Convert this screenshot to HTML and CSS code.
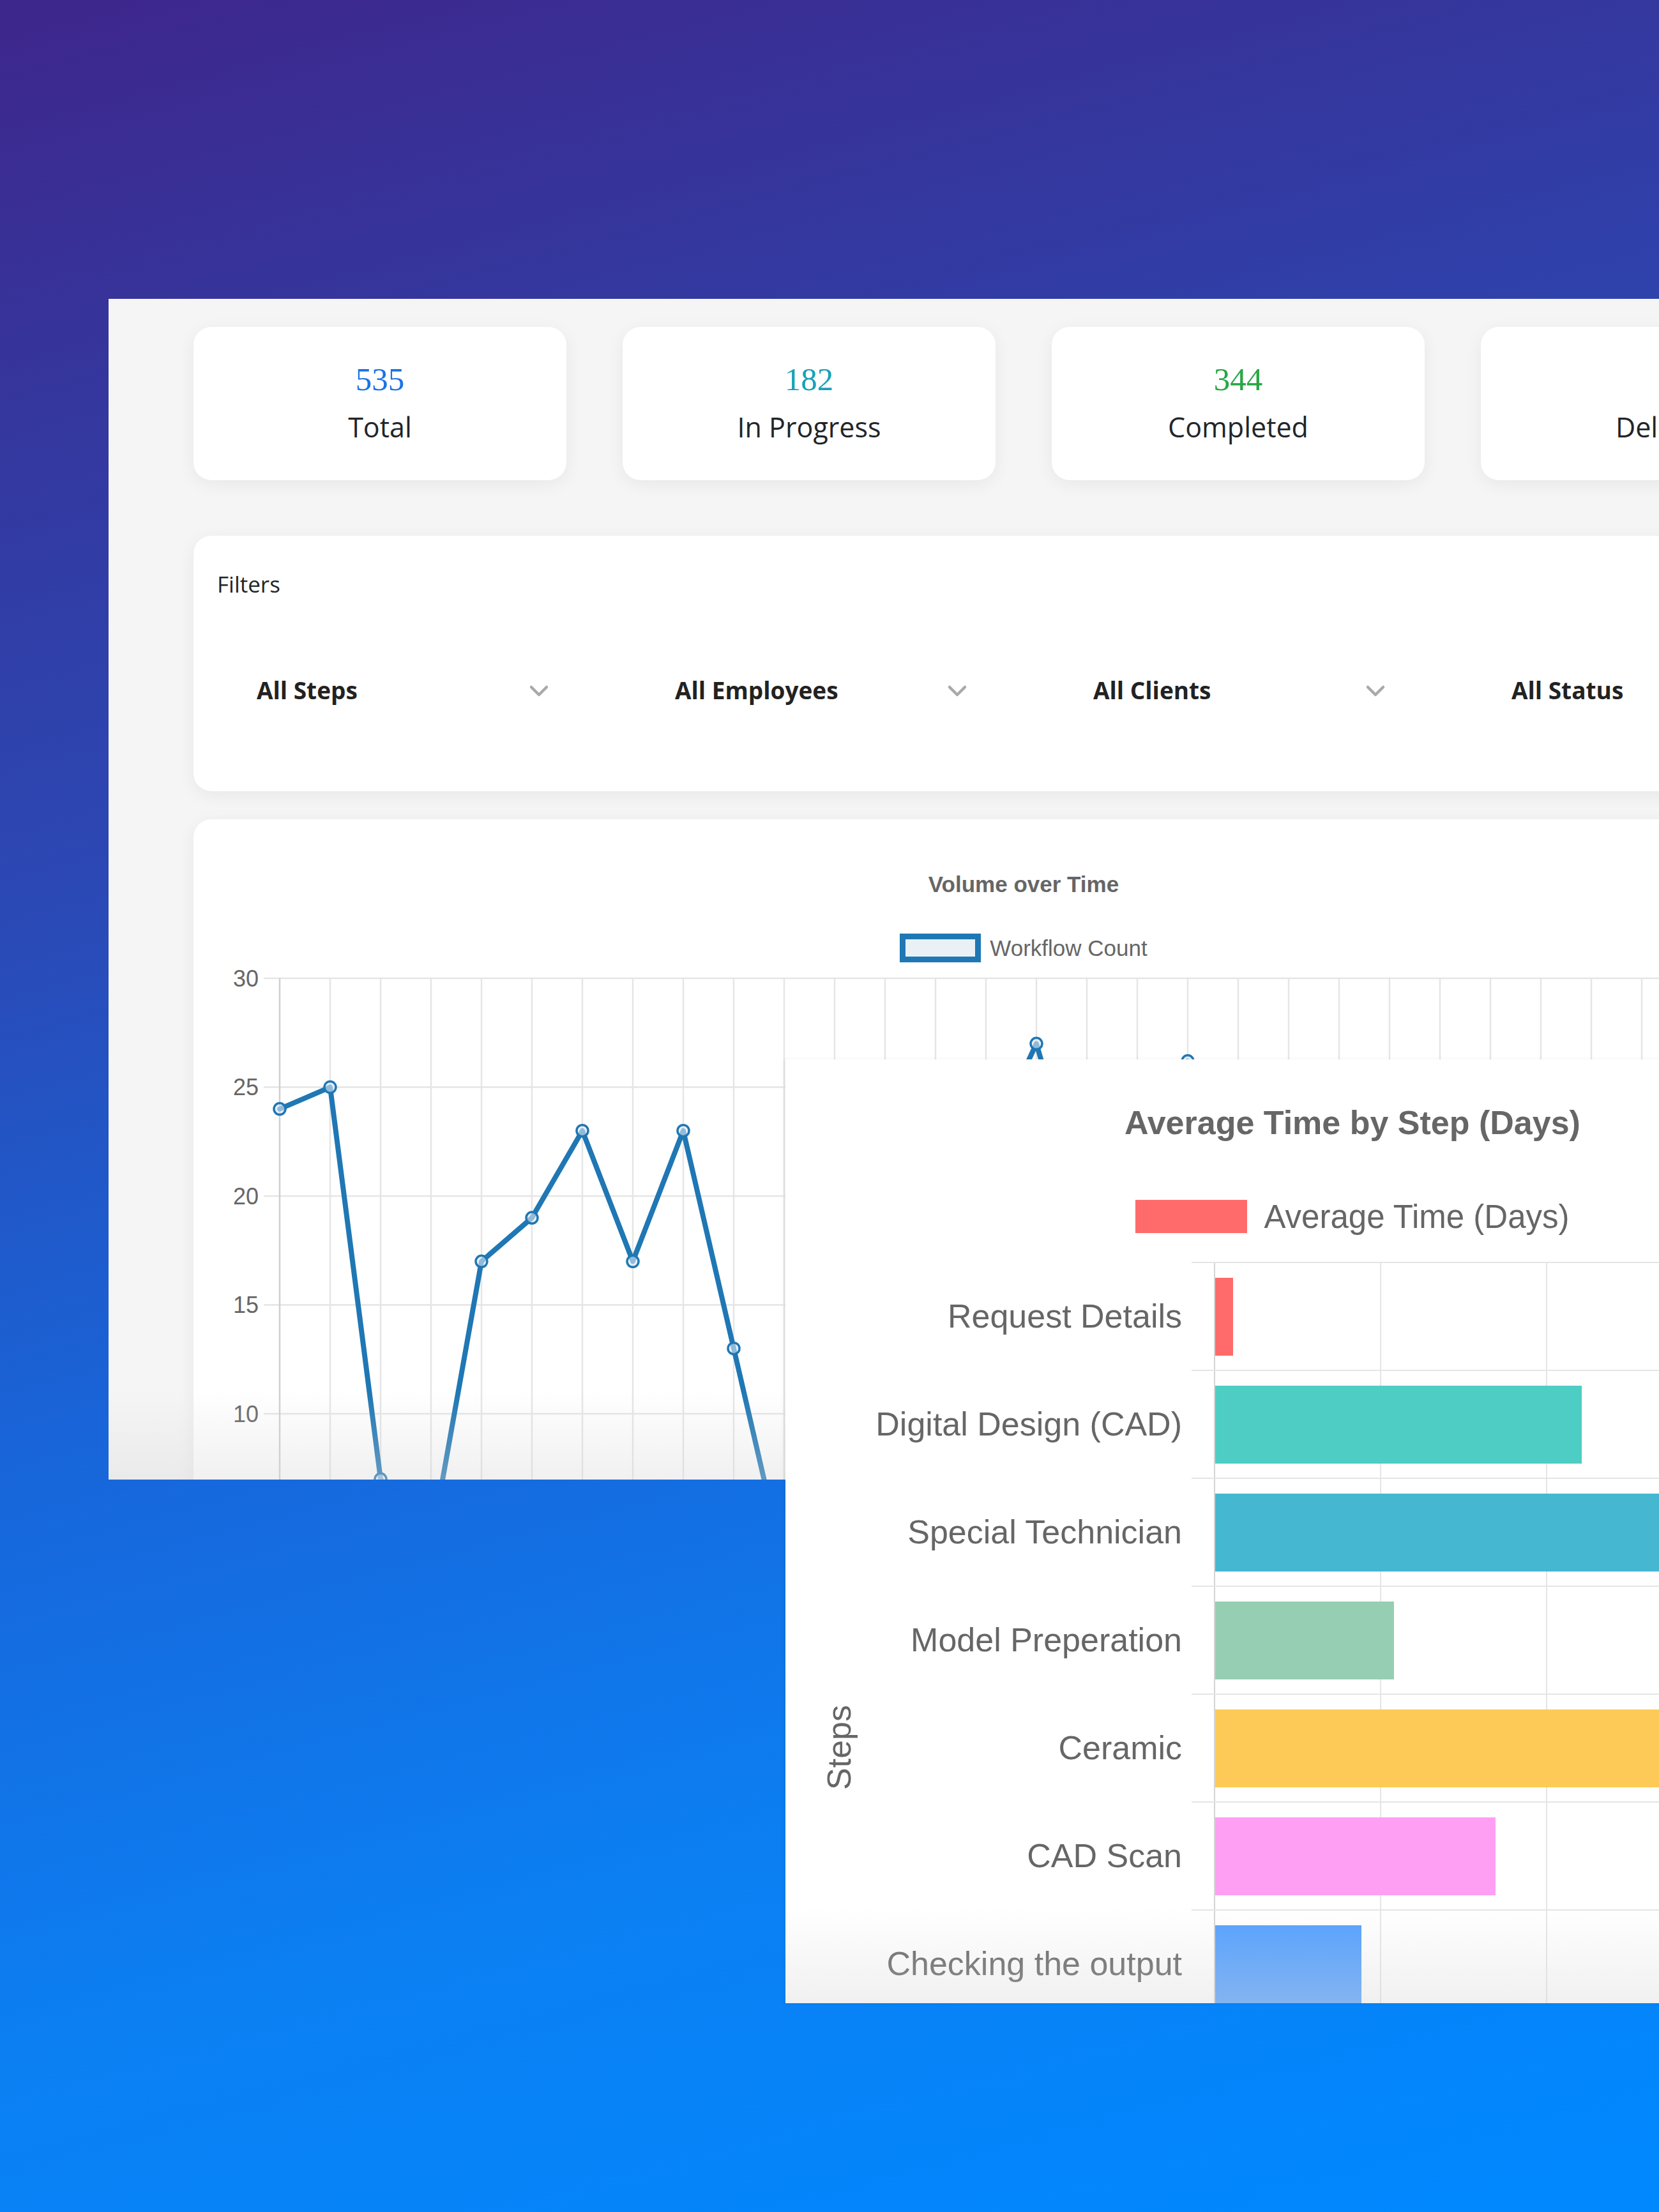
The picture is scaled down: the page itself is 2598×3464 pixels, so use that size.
FILE: index.html
```html
<!DOCTYPE html>
<html lang="en">
<head>
<meta charset="utf-8">
<title>Workflow Dashboard</title>
<link rel="stylesheet" href="styles.css">
</head>
<body>
<div class="panel">
  <div class="stats">
    <div class="stat"><div class="stat-num num-blue">535</div><div class="stat-label">Total</div></div>
    <div class="stat"><div class="stat-num num-teal">182</div><div class="stat-label">In Progress</div></div>
    <div class="stat"><div class="stat-num num-green">344</div><div class="stat-label">Completed</div></div>
    <div class="stat"><div class="stat-num num-red">9</div><div class="stat-label">Delayed</div></div>
  </div>

  <div class="card filters">
    <div class="filters-title">Filters</div>
    <div class="filter-row">
      <div class="select"><span>All Steps</span><svg class="chev" width="32" height="20" viewBox="0 0 32 20"><path d="M4 4 L16 16 L28 4" /></svg></div>
      <div class="select"><span>All Employees</span><svg class="chev" width="32" height="20" viewBox="0 0 32 20"><path d="M4 4 L16 16 L28 4" /></svg></div>
      <div class="select"><span>All Clients</span><svg class="chev" width="32" height="20" viewBox="0 0 32 20"><path d="M4 4 L16 16 L28 4" /></svg></div>
      <div class="select"><span>All Status</span><svg class="chev" width="32" height="20" viewBox="0 0 32 20"><path d="M4 4 L16 16 L28 4" /></svg></div>
    </div>
  </div>

  <div class="card chart-card">
    <div class="chart-title">Volume over Time</div>
    <div class="legend"><span class="legend-box"></span><span class="legend-text">Workflow Count</span></div>
    <svg class="line-svg" width="2600" height="1000" viewBox="0 0 2600 1000">
      <g class="hgrid">
        <line x1="110" y1="25" x2="2600" y2="25"/>
        <line x1="110" y1="195.5" x2="2600" y2="195.5"/>
        <line x1="110" y1="366" x2="2600" y2="366"/>
        <line x1="110" y1="536.5" x2="2600" y2="536.5"/>
        <line x1="110" y1="707" x2="2600" y2="707"/>
        <line x1="110" y1="877.5" x2="2600" y2="877.5"/>
      </g>
      <g class="vgrid">
        <line x1="214" y1="25" x2="214" y2="1000"/>
        <line x1="293" y1="25" x2="293" y2="1000"/>
        <line x1="372" y1="25" x2="372" y2="1000"/>
        <line x1="451" y1="25" x2="451" y2="1000"/>
        <line x1="530" y1="25" x2="530" y2="1000"/>
        <line x1="609" y1="25" x2="609" y2="1000"/>
        <line x1="688" y1="25" x2="688" y2="1000"/>
        <line x1="767" y1="25" x2="767" y2="1000"/>
        <line x1="846" y1="25" x2="846" y2="1000"/>
        <line x1="925" y1="25" x2="925" y2="1000"/>
        <line x1="1004" y1="25" x2="1004" y2="1000"/>
        <line x1="1083" y1="25" x2="1083" y2="1000"/>
        <line x1="1162" y1="25" x2="1162" y2="1000"/>
        <line x1="1241" y1="25" x2="1241" y2="1000"/>
        <line x1="1320" y1="25" x2="1320" y2="1000"/>
        <line x1="1399" y1="25" x2="1399" y2="1000"/>
        <line x1="1478" y1="25" x2="1478" y2="1000"/>
        <line x1="1557" y1="25" x2="1557" y2="1000"/>
        <line x1="1636" y1="25" x2="1636" y2="1000"/>
        <line x1="1715" y1="25" x2="1715" y2="1000"/>
        <line x1="1794" y1="25" x2="1794" y2="1000"/>
        <line x1="1873" y1="25" x2="1873" y2="1000"/>
        <line x1="1952" y1="25" x2="1952" y2="1000"/>
        <line x1="2031" y1="25" x2="2031" y2="1000"/>
        <line x1="2110" y1="25" x2="2110" y2="1000"/>
        <line x1="2189" y1="25" x2="2189" y2="1000"/>
        <line x1="2268" y1="25" x2="2268" y2="1000"/>
        <line x1="2347" y1="25" x2="2347" y2="1000"/>
        <line x1="2426" y1="25" x2="2426" y2="1000"/>
        <line x1="2505" y1="25" x2="2505" y2="1000"/>
        <line x1="2584" y1="25" x2="2584" y2="1000"/>
      </g>
      <line class="yaxis" x1="135" y1="25" x2="135" y2="1000"/>
      <g class="ylabels">
        <text x="102" y="25">30</text>
        <text x="102" y="195.5">25</text>
        <text x="102" y="366">20</text>
        <text x="102" y="536.5">15</text>
        <text x="102" y="707">10</text>
        <text x="102" y="877.5">5</text>
      </g>
      <polyline class="series" points="135,229.6 214,195.5 293,809.3 372,911.6 451,468.3 530,400.1 609,263.7 688,468.3 767,263.7 846,604.7 925,945.7 1004,775.2 1083,536.5 1162,366 1241,297.8 1320,127.3 1399,400.1 1478,638.8 1557,154.6 1636,434.2 1715,570.6 1794,331.9 1873,707 1952,502.4 2031,297.8 2110,741.1 2189,400.1 2268,229.6 2347,536.5 2426,366 2505,672.9"/>
      <g class="pts">
        <circle cx="135" cy="229.6" r="9"/>
        <circle cx="214" cy="195.5" r="9"/>
        <circle cx="293" cy="809.3" r="9"/>
        <circle cx="372" cy="911.6" r="9"/>
        <circle cx="451" cy="468.3" r="9"/>
        <circle cx="530" cy="400.1" r="9"/>
        <circle cx="609" cy="263.7" r="9"/>
        <circle cx="688" cy="468.3" r="9"/>
        <circle cx="767" cy="263.7" r="9"/>
        <circle cx="846" cy="604.7" r="9"/>
        <circle cx="925" cy="945.7" r="9"/>
        <circle cx="1004" cy="775.2" r="9"/>
        <circle cx="1083" cy="536.5" r="9"/>
        <circle cx="1162" cy="366" r="9"/>
        <circle cx="1241" cy="297.8" r="9"/>
        <circle cx="1320" cy="127.3" r="9"/>
        <circle cx="1399" cy="400.1" r="9"/>
        <circle cx="1478" cy="638.8" r="9"/>
        <circle cx="1557" cy="154.6" r="9"/>
        <circle cx="1636" cy="434.2" r="9"/>
        <circle cx="1715" cy="570.6" r="9"/>
        <circle cx="1794" cy="331.9" r="9"/>
        <circle cx="1873" cy="707" r="9"/>
        <circle cx="1952" cy="502.4" r="9"/>
        <circle cx="2031" cy="297.8" r="9"/>
        <circle cx="2110" cy="741.1" r="9"/>
        <circle cx="2189" cy="400.1" r="9"/>
        <circle cx="2268" cy="229.6" r="9"/>
        <circle cx="2347" cy="536.5" r="9"/>
        <circle cx="2426" cy="366" r="9"/>
        <circle cx="2505" cy="672.9" r="9"/>
      </g>
    </svg>
  </div>
</div>

<div class="bar-window">
  <div class="bw-title">Average Time by Step (Days)</div>
  <div class="bw-legend"><span class="bw-legend-box"></span><span class="bw-legend-text">Average Time (Days)</span></div>
  <div class="bplot">
    <div class="steps-col"><span class="steps-label">Steps</span></div>
    <div class="brows">
      <div class="brow"><div class="blabel">Request Details</div><div class="bcell"><div class="btrack"><div class="bar c1" style="width:28px"></div></div></div></div>
      <div class="brow"><div class="blabel">Digital Design (CAD)</div><div class="bcell"><div class="btrack"><div class="bar c2" style="width:574px"></div></div></div></div>
      <div class="brow"><div class="blabel">Special Technician</div><div class="bcell"><div class="btrack"><div class="bar c3" style="width:1010px"></div></div></div></div>
      <div class="brow"><div class="blabel">Model Preperation</div><div class="bcell"><div class="btrack"><div class="bar c4" style="width:280px"></div></div></div></div>
      <div class="brow"><div class="blabel">Ceramic</div><div class="bcell"><div class="btrack"><div class="bar c5" style="width:1080px"></div></div></div></div>
      <div class="brow"><div class="blabel">CAD Scan</div><div class="bcell"><div class="btrack"><div class="bar c6" style="width:439px"></div></div></div></div>
      <div class="brow"><div class="blabel">Checking the output</div><div class="bcell"><div class="btrack"><div class="bar c7" style="width:229px"></div></div></div></div>
    </div>
  </div>
</div>
</body>
</html>
```

FILE: styles.css
```css
html, body {
  margin: 0;
}

body {
  width: 2598px;
  height: 3464px;
  box-sizing: border-box;
  padding-top: 468px;
  overflow: hidden;
  position: relative;
  font-family: "Open Sans", "Liberation Sans", sans-serif;
  background: linear-gradient(165deg, #3e268c 0%, #34389f 17%, #2c47b3 33%, #1865d9 55%, #0b80f3 78%, #0088ff 100%);
}

/* ---------- dashboard panel ---------- */
.panel {
  margin-left: 170px;
  width: 2800px;
  height: 1849px;
  box-sizing: border-box;
  padding: 44px 0 0 133px;
  background: #f5f5f6;
  overflow: hidden;
  position: relative;
}

.panel::after {
  content: "";
  position: absolute;
  left: 0;
  right: 0;
  bottom: 0;
  height: 140px;
  background: linear-gradient(to bottom, rgba(215, 215, 215, 0), rgba(215, 215, 215, 0.36));
  pointer-events: none;
}

.stats {
  display: grid;
  grid-template-columns: repeat(4, 584px);
  column-gap: 88px;
}

.stat {
  height: 240px;
  box-sizing: border-box;
  padding-top: 52px;
  background: #fff;
  border-radius: 28px;
  box-shadow: 0 6px 28px rgba(0, 0, 0, 0.06);
  text-align: center;
}

.stat-num {
  font-family: "Liberation Serif", "DejaVu Serif", serif;
  font-size: 51px;
  line-height: 60px;
}

.num-blue { color: #1a73e8; }
.num-teal { color: #17a2b8; }
.num-green { color: #28a745; }
.num-red { color: #dc3545; }

.stat-label {
  margin-top: 17px;
  font-size: 43px;
  line-height: 56px;
  color: #212529;
}

.card {
  width: 2600px;
  box-sizing: border-box;
  background: #fff;
  border-radius: 28px;
  box-shadow: 0 6px 28px rgba(0, 0, 0, 0.06);
}

/* ---------- filters ---------- */
.filters {
  margin-top: 87px;
  height: 400px;
  padding: 52px 37px 0;
}

.filters-title {
  font-size: 35px;
  line-height: 48px;
  color: #212529;
}

.filter-row {
  margin-top: 91px;
  display: grid;
  grid-template-columns: repeat(4, 561px);
  column-gap: 94px;
}

.select {
  height: 100px;
  box-sizing: border-box;
  padding: 0 41px 0 62px;
  display: flex;
  align-items: center;
  justify-content: space-between;
  font-size: 37px;
  font-weight: 700;
  color: #222;
}

.chev {
  display: block;
  margin-top: 4px;
}

.chev path {
  fill: none;
  stroke: #a9a9a9;
  stroke-width: 4.5;
  stroke-linecap: round;
  stroke-linejoin: round;
}

/* ---------- line chart ---------- */
.chart-card {
  margin-top: 44px;
  height: 1300px;
  padding-top: 82px;
  text-align: center;
}

.chart-title {
  font-family: "Liberation Sans", Arial, sans-serif;
  font-weight: 700;
  font-size: 35px;
  line-height: 40px;
  color: #666;
}

.legend {
  margin-top: 57px;
  height: 45px;
  display: flex;
  justify-content: center;
  align-items: center;
  gap: 14px;
}

.legend-box {
  width: 127px;
  height: 45px;
  box-sizing: border-box;
  border: 9px solid #1f77b4;
  background: #e9f1f7;
}

.legend-text {
  font-family: "Liberation Sans", Arial, sans-serif;
  font-size: 35px;
  color: #666;
}

.line-svg {
  display: block;
}

.hgrid line,
.vgrid line {
  stroke: #e5e5e5;
  stroke-width: 2.5;
}

.yaxis {
  stroke: #cfcfcf;
  stroke-width: 2.5;
}

.ylabels text {
  font-family: "Liberation Sans", Arial, sans-serif;
  font-size: 36px;
  fill: #666;
  text-anchor: end;
  dominant-baseline: central;
}

.series {
  fill: none;
  stroke: #1f77b4;
  stroke-width: 8;
  stroke-linejoin: round;
  stroke-linecap: round;
}

.pts circle {
  fill: rgba(220, 234, 245, 0.6);
  stroke: #1f77b4;
  stroke-width: 3.5;
}

/* ---------- bar chart window ---------- */
.bar-window {
  position: absolute;
  left: 1230px;
  top: 1659px;
  width: 1776px;
  height: 1478px;
  box-sizing: border-box;
  padding-top: 69px;
  background: #fff;
  overflow: hidden;
  box-shadow: -2px 0 6px rgba(0, 0, 0, 0.06);
  font-family: "Liberation Sans", Arial, sans-serif;
  color: #666;
}

.bar-window::after {
  content: "";
  position: absolute;
  left: 0;
  right: 0;
  bottom: 0;
  height: 150px;
  background: linear-gradient(to bottom, rgba(215, 215, 215, 0), rgba(215, 215, 215, 0.36));
  pointer-events: none;
}

.bw-title {
  text-align: center;
  font-weight: 700;
  font-size: 52px;
  line-height: 60px;
}

.bw-legend {
  margin-top: 91px;
  height: 52px;
  display: flex;
  justify-content: center;
  align-items: center;
  gap: 26px;
}

.bw-legend-box {
  width: 175px;
  height: 52px;
  background: #ff6b6b;
}

.bw-legend-text {
  font-size: 51px;
}

.bplot {
  margin-top: 45px;
  display: flex;
}

.steps-col {
  width: 168px;
  height: 1521px;
  display: flex;
  align-items: center;
  justify-content: center;
}

.steps-label {
  writing-mode: vertical-rl;
  transform: rotate(180deg);
  font-size: 52px;
}

.brows {
  flex: 1;
  display: flex;
  flex-direction: column;
}

.brow {
  height: 169px;
  display: flex;
}

.blabel {
  width: 453px;
  display: flex;
  align-items: center;
  justify-content: flex-end;
  font-size: 52px;
  white-space: nowrap;
}

.bcell {
  flex: 1;
  margin-left: 15px;
  padding-left: 35px;
  border-top: 2px solid #e5e5e5;
  display: flex;
}

.btrack {
  flex: 1;
  border-left: 2px solid #d4d4d4;
  display: flex;
  align-items: center;
  background: repeating-linear-gradient(90deg, transparent 0 258px, #e5e5e5 258px 260px);
}

.bar {
  height: 122px;
}

.c1 { background: #ff6b6b; }
.c2 { background: #4ecdc4; }
.c3 { background: #45b7d1; }
.c4 { background: #96ceb4; }
.c5 { background: #feca57; }
.c6 { background: #ff9ff3; }
.c7 { background: #54a0ff; }
```
